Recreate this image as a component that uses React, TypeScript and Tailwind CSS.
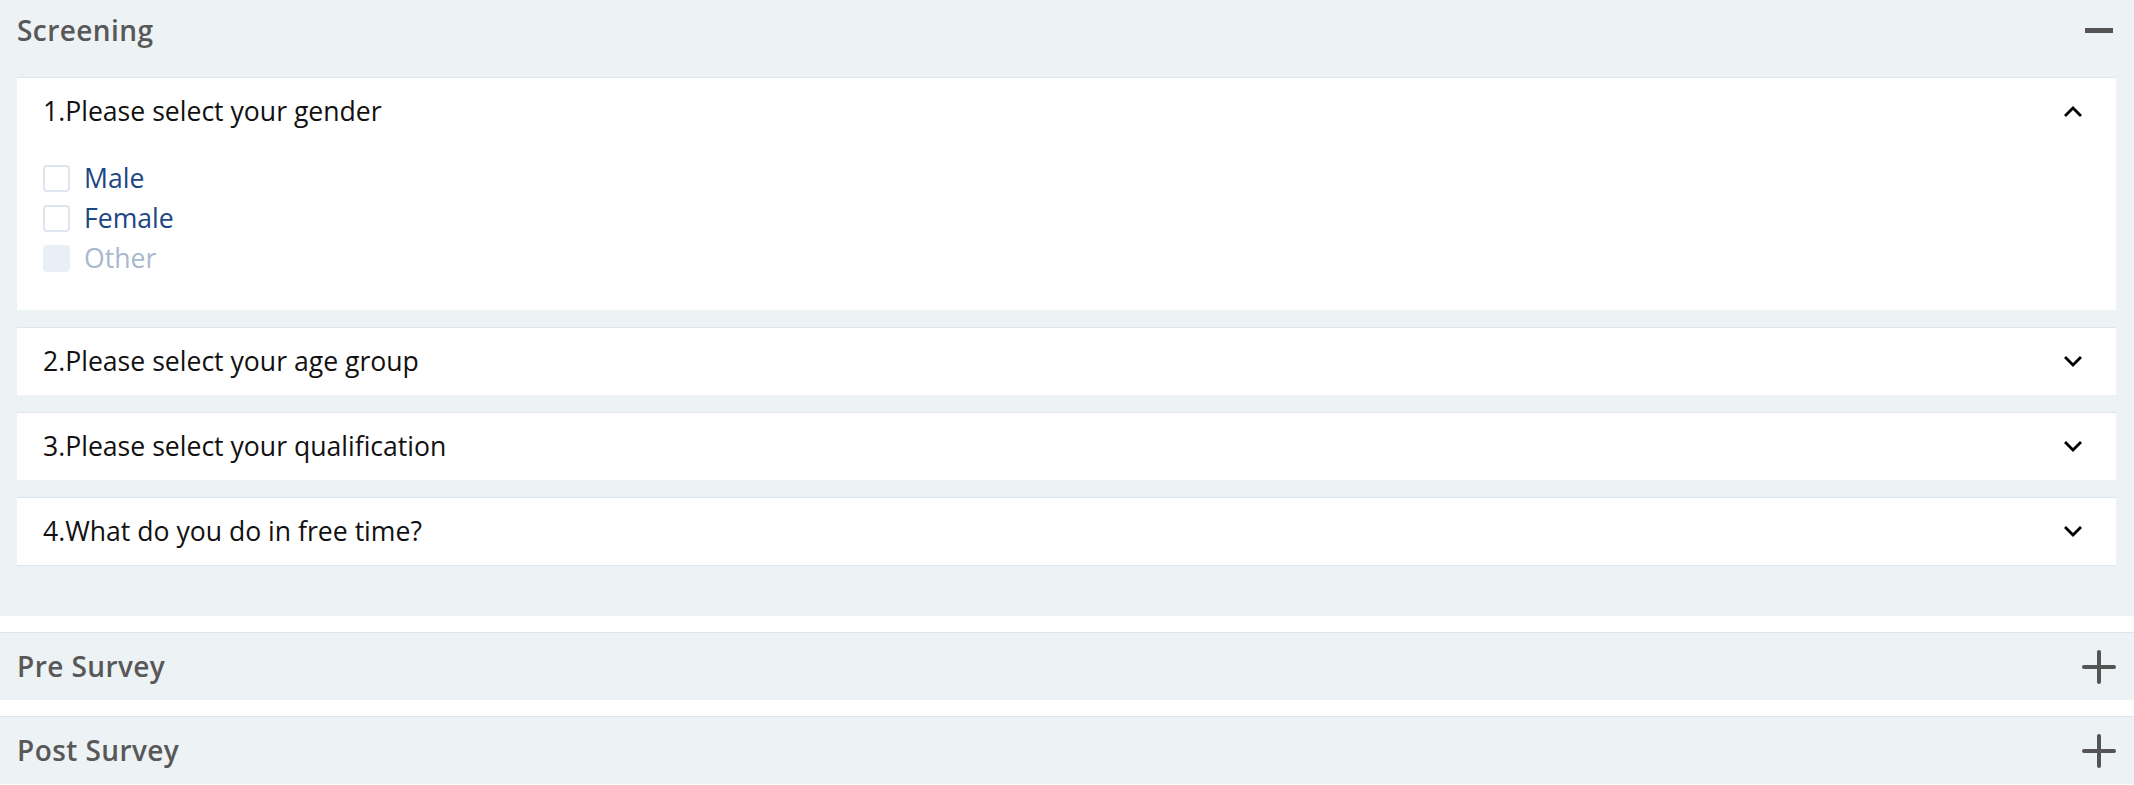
import { useState } from 'react';

const questions = [
  { id: 1, text: '1.Please select your gender', options: ['Male', 'Female', 'Other'] },
  { id: 2, text: '2.Please select your age group', options: [] },
  { id: 3, text: '3.Please select your qualification', options: [] },
  { id: 4, text: '4.What do you do in free time?', options: [] },
];

function Chevron({ up }: { up?: boolean }) {
  return (
    <svg width="18" height="11" viewBox="0 0 18 11" className={up ? '' : 'rotate-180'}>
      <path d="M2 9 L9 2 L16 9" fill="none" stroke="#000" strokeWidth="2.8" strokeLinecap="square" />
    </svg>
  );
}

function ToggleIcon({ open }: { open: boolean }) {
  return (
    <div className="relative w-[34px] h-[34px] flex items-center justify-center">
      {open ? (
        <div className="w-[28px] h-[5px] bg-[#555]" />
      ) : (
        <>
          <div className="absolute w-[34px] h-[4px] rounded-full bg-[#555]" />
          <div className="absolute w-[4px] h-[34px] rounded-full bg-[#555]" />
        </>
      )}
    </div>
  );
}

function QuestionCard({ q, open, last }: { q: (typeof questions)[number]; open: boolean; last: boolean }) {
  return (
    <div className={`bg-white border-t border-[#dde5ee] ${last ? 'border-b' : ''}`}>
      <div className="h-[67px] flex items-center justify-between pl-[26px] pr-[34px]">
        <span className="text-[26.6px] text-[#111]">{q.text}</span>
        <Chevron up={open} />
      </div>
      {open && (
        <div className="pl-[26px] pt-[13px] pb-[32px]">
          {q.options.map((opt) => {
            const disabled = opt === 'Other';
            return (
              <label key={opt} className="h-[40px] flex items-center gap-[14px]">
                <span
                  className={`w-[27px] h-[27px] rounded-[4px] border-[2.5px] ${
                    disabled ? 'bg-[#e9eff7] border-[#e9eff7]' : 'bg-white border-[#dfe6ef]'
                  }`}
                />
                <span className={`text-[26.6px] ${disabled ? 'text-[#a9b8cd]' : 'text-[#1d4683]'}`}>{opt}</span>
              </label>
            );
          })}
        </div>
      )}
    </div>
  );
}

function SectionTitle({ children }: { children: string }) {
  return <span className="text-[28px] tracking-[0.015em] font-semibold text-[#585858]">{children}</span>;
}

export default function App() {
  const [openQ] = useState(1);
  return (
    <div className="w-full bg-white font-['Open_Sans',sans-serif] leading-[1.362]">
      <section className="bg-[#edf2f5]">
        <div className="h-[60px] flex items-center justify-between pl-[17px] pr-[18px]">
          <SectionTitle>Screening</SectionTitle>
          <ToggleIcon open />
        </div>
        <div className="pl-[17px] pr-[18px] pt-[17px] pb-[50px] flex flex-col gap-[17px]">
          {questions.map((q, i) => (
            <QuestionCard key={q.id} q={q} open={q.id === openQ} last={i === questions.length - 1} />
          ))}
        </div>
      </section>
      <div className="h-[16px]" />
      <section className="bg-[#edf2f5] border-t border-[#dde5ee] h-[68px] flex items-center justify-between pl-[17px] pr-[18px]">
        <SectionTitle>Pre Survey</SectionTitle>
        <ToggleIcon open={false} />
      </section>
      <div className="h-[16px]" />
      <section className="bg-[#edf2f5] border-t border-[#dde5ee] h-[68px] flex items-center justify-between pl-[17px] pr-[18px]">
        <SectionTitle>Post Survey</SectionTitle>
        <ToggleIcon open={false} />
      </section>
    </div>
  );
}
